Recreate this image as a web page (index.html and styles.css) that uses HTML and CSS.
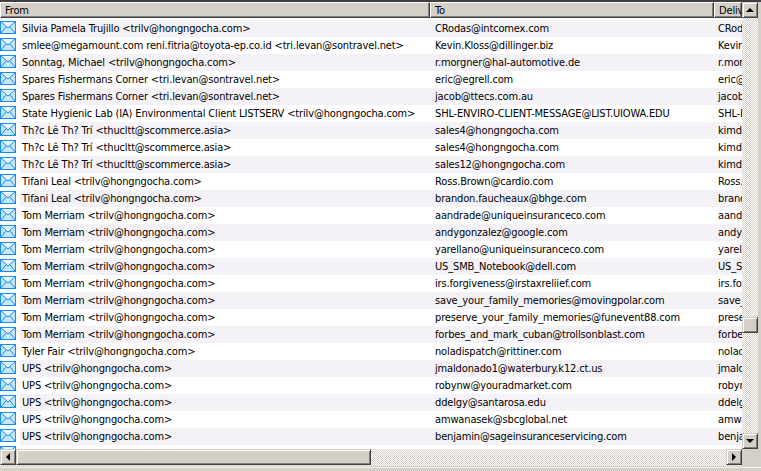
FILE: index.html
```html
<!DOCTYPE html>
<html>
<head>
<meta charset="utf-8">
<title>Mail list</title>
<link rel="stylesheet" href="styles.css">
</head>
<body>
<svg class="defs" width="0" height="0"><defs>
<symbol id="mail" viewBox="0 0 16 13">
<rect x="0.5" y="0.5" width="15" height="12" fill="#c4e6fb" stroke="#1a8cf0"/>
<path d="M1 1l7 6 7-6" fill="#e6f6ff" stroke="#1a8cf0"/>
<path d="M1 12l5-6M15 12l-5-6" fill="none" stroke="#1a8cf0"/>
</symbol>
</defs></svg>
<div class="window">
  <div class="main">
    <div class="header">
      <div class="col from hcell">From</div>
      <div class="col to hcell">To</div>
      <div class="col deliv hcell">Deliv</div>
    </div>
    <div class="rows" id="rows"></div>
    <div class="hbar">
      <div class="btn"><span class="arrow left"></span></div>
      <div class="hthumb"></div>
      <div class="track"></div>
      <div class="btn"><span class="arrow right"></span></div>
    </div>
  </div>
  <div class="vbar">
    <div class="btn"><span class="arrow up"></span></div>
    <div class="track vtop"></div>
    <div class="vthumb"></div>
    <div class="track"></div>
    <div class="btn"><span class="arrow down"></span></div>
  </div>
</div>
<script src="app.js"></script>
</body>
</html>
```
FILE: styles.css
```css
* { box-sizing: border-box; }
html, body { margin: 0; padding: 0; }
body { width: 761px; height: 471px; overflow: hidden; background: #d4d0c8; font-family: "DejaVu Sans Condensed", "Liberation Sans", sans-serif; font-size: 11px; letter-spacing: -0.15px; color: #000; }
.defs { position: absolute; }
.window { width: 761px; height: 471px; display: flex; padding-bottom: 5px; border-top: 2px solid #404040; background: #d4d0c8; position: relative; }
.window::after { content: ""; position: absolute; left: 0; right: 0; bottom: 3px; height: 1px; background: #f4f2ee; }
.main { width: 742px; flex: none; display: flex; flex-direction: column; min-height: 0; }
.header { display: flex; height: 16px; flex: none; background: #d4d0c8; }
.hcell { height: 16px; line-height: 15px; padding-left: 4px; border: 1px solid; border-color: #fff #404040 #404040 #fff; box-shadow: inset -1px -1px 0 #808080; overflow: hidden; white-space: nowrap; }
.from { width: 430px; flex: none; }
.to { width: 284px; flex: none; }
.deliv { width: 28px; flex: none; }
.rows { flex: 1; min-height: 0; overflow: hidden; background: #fff; padding-top: 2px; }
.row { display: flex; height: 17px; align-items: center; white-space: nowrap; }
.icon { width: 20px; height: 17px; flex: none; background: #fff; padding: 1px 0 0 0; }
.icon svg { display: block; width: 16px; height: 13px; }
.cells { display: flex; flex: 1; height: 17px; line-height: 17px; }
.row:nth-child(odd) .cells { background: #f5f2f7; }
.cell { overflow: hidden; flex: none; }
.c1 { width: 415px; padding-left: 2px; }
.c2 { width: 283px; padding-left: 0; }
.c3 { width: 24px; padding-left: 0; }
.hbar { height: 17px; flex: none; display: flex; align-items: flex-start; background-color: #fff; background-image: conic-gradient(#d4d0c8 25%, #fff 0 50%, #d4d0c8 0 75%, #fff 0); background-size: 2px 2px; }
.btn { width: 16px; height: 16px; flex: none; background: #d4d0c8; border: 1px solid; border-color: #d4d0c8 #404040 #404040 #d4d0c8; box-shadow: inset 1px 1px 0 #fff, inset -1px -1px 0 #808080; display: flex; align-items: center; justify-content: center; }
.hthumb { width: 355px; height: 16px; flex: none; background: #d4d0c8; border: 1px solid; border-color: #d4d0c8 #404040 #404040 #d4d0c8; box-shadow: inset 1px 1px 0 #fff, inset -1px -1px 0 #808080; }
.track { flex: 1; align-self: stretch; }
.arrow { width: 0; height: 0; border: 4px solid transparent; }
.arrow.left { border-left: 0; border-right-color: #000; }
.arrow.right { border-right: 0; border-left-color: #000; }
.arrow.up { border-top: 0; border-bottom-color: #000; }
.arrow.down { border-bottom: 0; border-top-color: #000; }
.vbar { width: 16px; flex: none; height: 447px; display: flex; flex-direction: column; background-color: #fff; background-image: conic-gradient(#d4d0c8 25%, #fff 0 50%, #d4d0c8 0 75%, #fff 0); background-size: 2px 2px; }
.vtop { flex: none; height: 299px; }
.vthumb { height: 16px; flex: none; background: #d4d0c8; border: 1px solid; border-color: #d4d0c8 #404040 #404040 #d4d0c8; box-shadow: inset 1px 1px 0 #fff, inset -1px -1px 0 #808080; }
```
FILE: app.js
```js
var data = [
["Silvia Pamela Trujillo <trilv@hongngocha.com>","CRodas@intcomex.com","CRodas"],
["smlee@megamount.com reni.fitria@toyota-ep.co.id <tri.levan@sontravel.net>","Kevin.Kloss@dillinger.biz","Kevin"],
["Sonntag, Michael <trilv@hongngocha.com>","r.morgner@hal-automotive.de","r.morgner"],
["Spares Fishermans Corner <tri.levan@sontravel.net>","eric@egrell.com","eric@"],
["Spares Fishermans Corner <tri.levan@sontravel.net>","jacob@ttecs.com.au","jacob"],
["State Hygienic Lab (IA) Environmental Client LISTSERV <trilv@hongngocha.com>","SHL-ENVIRO-CLIENT-MESSAGE@LIST.UIOWA.EDU","SHL-E"],
["Th?c Lê Th? Trí <thucltt@scommerce.asia>","sales4@hongngocha.com","kimdi"],
["Th?c Lê Th? Trí <thucltt@scommerce.asia>","sales4@hongngocha.com","kimdi"],
["Th?c Lê Th? Trí <thucltt@scommerce.asia>","sales12@hongngocha.com","kimdi"],
["Tifani Leal <trilv@hongngocha.com>","Ross.Brown@cardio.com","Ross."],
["Tifani Leal <trilv@hongngocha.com>","brandon.faucheaux@bhge.com","brand"],
["Tom Merriam <trilv@hongngocha.com>","aandrade@uniqueinsuranceco.com","aandr"],
["Tom Merriam <trilv@hongngocha.com>","andygonzalez@google.com","andyg"],
["Tom Merriam <trilv@hongngocha.com>","yarellano@uniqueinsuranceco.com","yarel"],
["Tom Merriam <trilv@hongngocha.com>","US_SMB_Notebook@dell.com","US_SM"],
["Tom Merriam <trilv@hongngocha.com>","irs.forgiveness@irstaxreliief.com","irs.fo"],
["Tom Merriam <trilv@hongngocha.com>","save_your_family_memories@movingpolar.com","save_"],
["Tom Merriam <trilv@hongngocha.com>","preserve_your_family_memories@funevent88.com","prese"],
["Tom Merriam <trilv@hongngocha.com>","forbes_and_mark_cuban@trollsonblast.com","forbe"],
["Tyler Fair <trilv@hongngocha.com>","noladispatch@rittiner.com","nolad"],
["UPS <trilv@hongngocha.com>","jmaldonado1@waterbury.k12.ct.us","jmald"],
["UPS <trilv@hongngocha.com>","robynw@youradmarket.com","robyn"],
["UPS <trilv@hongngocha.com>","ddelgy@santarosa.edu","ddelg"],
["UPS <trilv@hongngocha.com>","amwanasek@sbcglobal.net","amwan"],
["UPS <trilv@hongngocha.com>","benjamin@sageinsuranceservicing.com","benja"],
["UPS <trilv@hongngocha.com>","MckPed@kite.com","MckPe"]
];
var root = document.getElementById("rows");
data.forEach(function (d) {
  var row = document.createElement("div");
  row.className = "row";
  var icon = document.createElement("div");
  icon.className = "icon";
  icon.innerHTML = '<svg><use href="#mail"/></svg>';
  row.appendChild(icon);
  var cells = document.createElement("div");
  cells.className = "cells";
  d.forEach(function (t, i) {
    var c = document.createElement("div");
    c.className = "cell c" + (i + 1);
    c.textContent = t;
    cells.appendChild(c);
  });
  row.appendChild(cells);
  root.appendChild(row);
});
```
